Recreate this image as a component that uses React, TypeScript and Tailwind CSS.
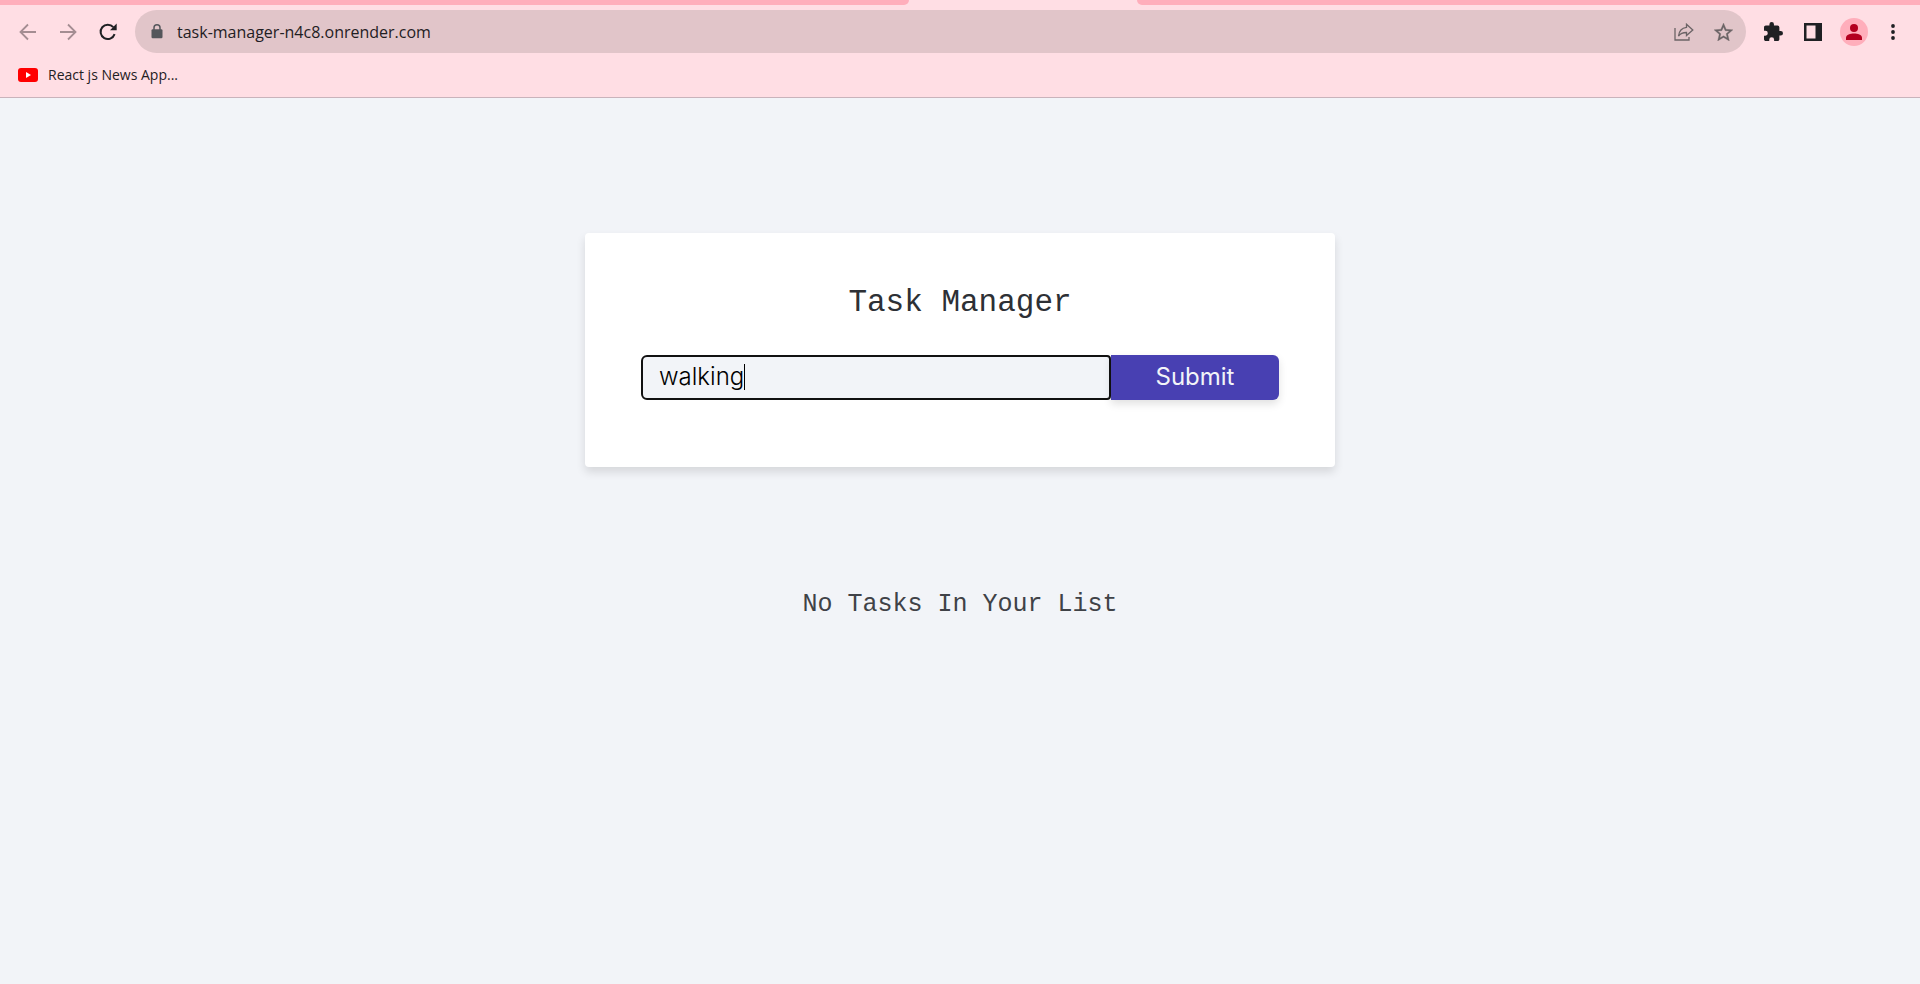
import { useState } from "react";

function BackIcon() {
  return (
    <svg viewBox="0 0 18 18" className="size-[18px]" fill="none" stroke="#a48d92" strokeWidth="1.8">
      <path d="M17 9H2M9 1.5 1.5 9 9 16.5" />
    </svg>
  );
}

function ForwardIcon() {
  return (
    <svg viewBox="0 0 18 18" className="size-[18px]" fill="none" stroke="#a48d92" strokeWidth="1.8">
      <path d="M1 9h15M9 1.5 16.500 9 9 16.500" />
    </svg>
  );
}

function ReloadIcon() {
  return (
    <svg viewBox="0 0 18 18" className="size-[18px]">
      <path d="M15.600 11.200A7.200 7.200 0 1 1 14.300 4.200" fill="none" stroke="#1f2023" strokeWidth="2" />
      <path d="M17.700 0.500V7.200H11z" fill="#1f2023" />
    </svg>
  );
}

function LockIcon() {
  return (
    <svg viewBox="0 0 12 15" className="h-[15px] w-3">
      <path d="M3 6V3.800a3 3 0 0 1 6 0V6" fill="none" stroke="#54565b" strokeWidth="1.500" />
      <rect x="0.500" y="5.300" width="11" height="9" rx="1.200" fill="#54565b" />
    </svg>
  );
}

function ShareIcon() {
  return (
    <svg viewBox="0 0 20 18" className="h-[18px] w-5" fill="none" stroke="#6b6466" strokeWidth="1.300">
      <path d="M1 5v12h14v-3" />
      <path d="M12.500 1.200 18.800 7l-6.300 5.500V9.500c-3.800 0-6.200 1-8 3.600C5 8.500 8 5 12.500 4.400z" />
    </svg>
  );
}

function StarIcon() {
  return (
    <svg viewBox="2 2 20 19" className="h-[18px] w-[19px]" fill="#6b6466" stroke="#6b6466" strokeWidth="0.300">
      <path d="m22 9.240-7.190-.620L12 2 9.190 8.630 2 9.240l5.460 4.730L5.820 21 12 17.270 18.180 21l-1.630-7.030L22 9.240zM12 15.400l-3.760 2.270 1-4.280-3.320-2.880 4.380-.380L12 6.100l1.710 4.040 4.380.380-3.320 2.880 1 4.280L12 15.400z" />
    </svg>
  );
}

function PuzzleIcon() {
  return (
    <svg viewBox="2 1 21 21" className="size-[19px]" fill="#1f2023">
      <path d="M20.500 11H19V7c0-1.100-.900-2-2-2h-4V3.500a2.500 2.500 0 0 0-5 0V5H4c-1.100 0-1.990.900-1.990 2v3.800H3.500a2.700 2.700 0 0 1 0 5.400H2V20c0 1.100.900 2 2 2h3.800v-1.500a2.700 2.700 0 0 1 5.400 0V22H17c1.100 0 2-.900 2-2v-4h1.500a2.500 2.500 0 0 0 0-5z" />
    </svg>
  );
}

function SidePanelIcon() {
  return (
    <svg viewBox="0 0 18 18" className="size-[18px]">
      <path fillRule="evenodd" fill="#1f2023" d="M0 0h18v18H0zM2.500 2.500v13h9v-13z" />
    </svg>
  );
}

function PersonIcon() {
  return (
    <svg viewBox="0 0 16 16" className="size-4" fill="#b3001f">
      <circle cx="8" cy="4" r="4" />
      <path d="M0 16v-2.200C0 10.800 4.500 9.500 8 9.500s8 1.300 8 4.300V16z" />
    </svg>
  );
}

function MenuIcon() {
  return (
    <svg viewBox="0 0 4 16" className="h-4 w-1" fill="#1f2023">
      <circle cx="2" cy="2" r="1.900" />
      <circle cx="2" cy="8" r="1.900" />
      <circle cx="2" cy="14" r="1.900" />
    </svg>
  );
}

function YoutubeIcon() {
  return (
    <svg viewBox="0 0 20 14" className="h-[14px] w-5">
      <rect width="20" height="14" rx="3" fill="#ff0000" />
      <path d="M8 4v6l5-3z" fill="#fff" />
    </svg>
  );
}

function BrowserBar() {
  const [url, setUrl] = useState("task-manager-n4c8.onrender.com");
  return (
    <header className="border-b border-[#c9b3bb] bg-[#ffdee4] font-['Open_Sans','Noto_Sans',sans-serif] text-[#1f2023]">
      <div className="flex h-[5px]">
        <div className="w-[909px] rounded-br-lg bg-[#ffaebb]" />
        <div className="w-[228px]" />
        <div className="flex-1 rounded-bl-lg bg-[#ffaebb]" />
      </div>
      <div className="flex items-center pt-[5px] pr-6 pl-[19px]">
        <nav className="flex items-center gap-[22px] pr-[18px]">
          <button type="button" aria-label="Back"><BackIcon /></button>
          <button type="button" aria-label="Forward"><ForwardIcon /></button>
          <button type="button" aria-label="Reload"><ReloadIcon /></button>
        </nav>
        <div className="flex h-[43px] flex-1 items-center rounded-full bg-[#e1c5c9] pr-[13px] pl-4">
          <LockIcon />
          <input
            aria-label="Address"
            className="ml-[14px] min-w-0 flex-1 bg-transparent text-base outline-none"
            value={url}
            onChange={(e) => setUrl(e.target.value)}
          />
          <div className="flex items-center gap-5">
            <button type="button" aria-label="Share"><ShareIcon /></button>
            <button type="button" aria-label="Bookmark this page"><StarIcon /></button>
          </div>
        </div>
        <div className="flex items-center pl-[18px]">
          <button type="button" aria-label="Extensions"><PuzzleIcon /></button>
          <button type="button" aria-label="Side panel" className="ml-[21px]"><SidePanelIcon /></button>
          <button type="button" aria-label="Profile" className="ml-[18px] flex size-7 items-center justify-center rounded-full bg-[#ffaebb]">
            <PersonIcon />
          </button>
          <button type="button" aria-label="Menu" className="ml-[22px] px-px"><MenuIcon /></button>
        </div>
      </div>
      <div className="flex h-11 items-center pl-[18px]">
        <a href="#bookmark" className="flex items-center gap-[10px] text-sm">
          <YoutubeIcon />
          React js News App...
        </a>
      </div>
    </header>
  );
}

export default function App() {
  const [task, setTask] = useState("walking");
  return (
    <div className="flex min-h-screen flex-col bg-[#f2f4f8]">
      <BrowserBar />
      <main className="flex-1 px-4 pt-[135px] text-center">
        <form
          className="mx-auto max-w-[750px] rounded bg-white px-14 pt-[50px] pb-[67px] shadow-[0_5px_10px_rgba(0,0,0,0.12)]"
          onSubmit={(e) => e.preventDefault()}
        >
          <h1 className="font-['Liberation_Mono',monospace] text-[31px] leading-10 text-[#2d3035]">Task Manager</h1>
          <div className="mt-8 flex h-[45px] font-['Inter',sans-serif]">
            <label className="flex flex-1 items-center rounded-md rounded-r border-2 border-[#111] bg-[#f2f4f8] px-4 pb-px">
              <input
                aria-label="Task"
                className="field-sizing-content max-w-full bg-transparent text-2xl leading-7 font-light text-black caret-transparent outline-none"
                value={task}
                onChange={(e) => setTask(e.target.value)}
              />
              <span className="h-[26px] w-px bg-black" />
            </label>
            <button
              type="submit"
              className="w-[168px] rounded-r-md bg-[#4840b2] pb-0.5 text-2xl leading-7 text-[#f2f4f8] shadow-[0_4px_8px_rgba(0,0,0,0.12)]"
            >
              Submit
            </button>
          </div>
        </form>
        <p className="mt-[122px] font-['Liberation_Mono',monospace] text-[25px] leading-8 text-[#3f4247]">
          No Tasks In Your List
        </p>
      </main>
    </div>
  );
}
